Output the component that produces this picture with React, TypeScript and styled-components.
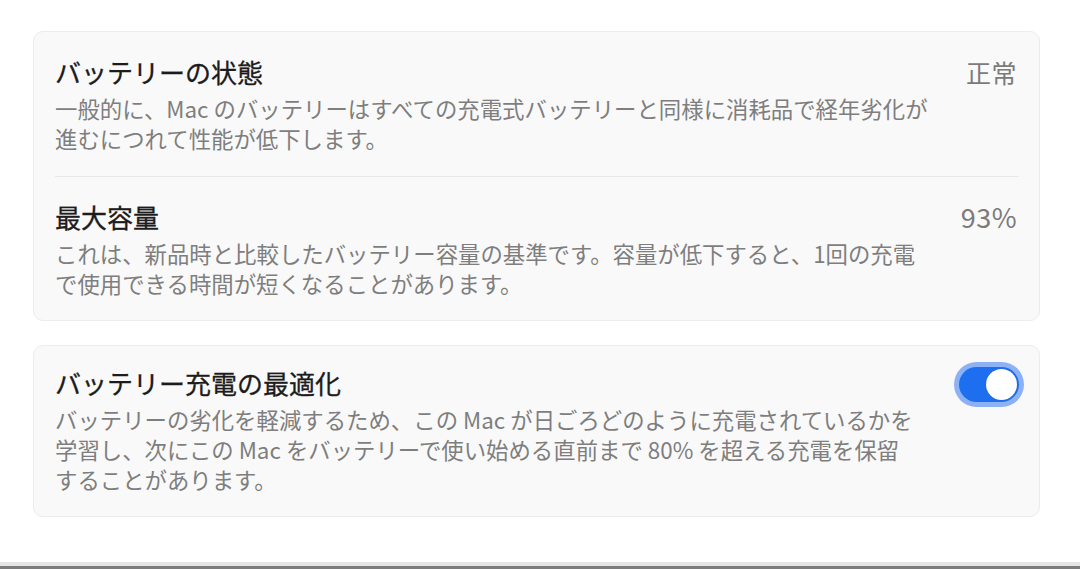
import React, { useState } from 'react'
import styled, { createGlobalStyle } from 'styled-components'

const GlobalStyle = createGlobalStyle`
    html, body {
        margin: 0;
        padding: 0;
        background: #fff;
    }
    body {
        font-family: "Noto Sans CJK JP", "Noto Sans", "Liberation Sans", sans-serif;
        -webkit-font-smoothing: antialiased;
    }
`

const SPage = styled.div`
    display: flex;
    flex-direction: column;
    height: 569px;
    box-sizing: border-box;
`

const SContent = styled.div`
    flex: 1;
    display: flex;
    flex-direction: column;
    gap: 24px;
    padding: 31px 40px 0 33px;
`

const SCard = styled.div`
    background: #f9f9f9;
    border: 1px solid #ececec;
    border-radius: 10px;
    padding: 0 20px 0 21px;
`

const SRow = styled.div<{ $pt: number; $pb: number; $divider?: boolean }>`
    display: flex;
    justify-content: space-between;
    align-items: flex-start;
    padding: ${p => p.$pt}px 0 ${p => p.$pb}px 0;
    border-top: ${p => (p.$divider ? '1px solid #e9e9e9' : 'none')};
`

const STexts = styled.div`
    display: flex;
    flex-direction: column;
    gap: 4px;
`

const STitle = styled.div`
    font-size: 26px;
    line-height: 34px;
    font-weight: 400;
    color: #1c1c1c;
    -webkit-text-stroke: 0.3px #1c1c1c;
`

const SDesc = styled.div`
    font-size: 22.4px;
    line-height: 30px;
    color: #7e7e7e;
    white-space: nowrap;
`

const SValue = styled.div<{ $size?: number }>`
    font-size: ${p => p.$size ?? 25}px;
    line-height: 34px;
    margin-right: 2px;
    color: #7b7b7b;
    letter-spacing: 0.5px;
`

const SSwitch = styled.button<{ $on: boolean }>`
    display: flex;
    align-items: center;
    justify-content: ${p => (p.$on ? 'flex-end' : 'flex-start')};
    width: 60px;
    height: 35px;
    margin: 1px 0 0 0;
    padding: 0 2px;
    border: none;
    border-radius: 18px;
    background: ${p => (p.$on ? '#1d6ff0' : '#dcdcdc')};
    box-shadow: 0 0 0 5px #8db1f5;
    cursor: pointer;
`

const SKnob = styled.span`
    width: 31px;
    height: 31px;
    border-radius: 50%;
    background: #fff;
    box-shadow: 0 0 1px rgba(0, 0, 0, 0.3);
`

const SFooter = styled.div`
    height: 3px;
    background: #7c7c7c;
    border-top: 4px solid #e5e5e5;
`

const App = () => {
    const [optimized, setOptimized] = useState(true)

    return (
        <SPage>
            <GlobalStyle />
            <SContent>
                <SCard>
                    <SRow $pt={23} $pb={23}>
                        <STexts>
                            <STitle>バッテリーの状態</STitle>
                            <SDesc>
                                一般的に、Mac のバッテリーはすべての充電式バッテリーと同様に消耗品で経年劣化が
                                <br />
                                進むにつれて性能が低下します。
                            </SDesc>
                        </STexts>
                        <SValue>正常</SValue>
                    </SRow>
                    <SRow $pt={23} $pb={22} $divider>
                        <STexts>
                            <STitle>最大容量</STitle>
                            <SDesc>
                                これは、新品時と比較したバッテリー容量の基準です。容量が低下すると、1回の充電
                                <br />
                                で使用できる時間が短くなることがあります。
                            </SDesc>
                        </STexts>
                        <SValue $size={27}>93%</SValue>
                    </SRow>
                </SCard>
                <SCard>
                    <SRow $pt={20} $pb={22}>
                        <STexts>
                            <STitle>バッテリー充電の最適化</STitle>
                            <SDesc>
                                バッテリーの劣化を軽減するため、この Mac が日ごろどのように充電されているかを
                                <br />
                                学習し、次にこの Mac をバッテリーで使い始める直前まで 80% を超える充電を保留
                                <br />
                                することがあります。
                            </SDesc>
                        </STexts>
                        <SSwitch $on={optimized} onClick={() => setOptimized(!optimized)}>
                            <SKnob />
                        </SSwitch>
                    </SRow>
                </SCard>
            </SContent>
            <SFooter />
        </SPage>
    )
}

export default App
